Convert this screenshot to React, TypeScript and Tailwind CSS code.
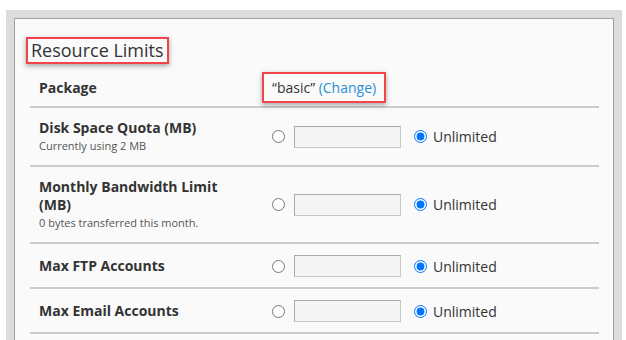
import React from "react";

type Limit = {
  label: string;
  note?: string;
};

const limits: Limit[] = [
  { label: "Disk Space Quota (MB)", note: "Currently using 2 MB" },
  { label: "Monthly Bandwidth Limit (MB)", note: "0 bytes transferred this month." },
  { label: "Max FTP Accounts" },
  { label: "Max Email Accounts" },
];

const LimitRow = ({ limit }: { limit: Limit }) => {
  return (
    <div
      className={
        limit.note
          ? "flex items-center border-b-2 border-[#cccccc] py-[11px]"
          : "flex items-center border-b-2 border-[#cccccc] pt-[11px] pb-[10px]"
      }
    >
      <div className="w-[231px] shrink-0 px-[9px]">
        <div className="text-[14px] leading-[18px] font-bold text-[#333333]">
          {limit.label}
        </div>
        {limit.note && (
          <div className="mt-[1px] text-[11px] leading-[16px] text-[#555555]">
            {limit.note}
          </div>
        )}
      </div>
      <div className="flex items-center pl-[11px]">
        <input
          type="radio"
          name={limit.label}
          className="m-0 h-[13px] w-[13px]"
          readOnly
        />
        <input
          type="text"
          readOnly
          className="ml-[9px] h-[22px] w-[107px] border border-[#a9a9a9] border-r-[#c8c8c8] border-b-[#c8c8c8] bg-[#f5f5f5]"
        />
        <input
          type="radio"
          name={limit.label}
          defaultChecked
          className="m-0 ml-[13px] h-[13px] w-[13px]"
        />
        <span className="ml-[6px] text-[14px] text-[#333333]">Unlimited</span>
      </div>
    </div>
  );
};

const App = () => {
  return (
    <div className="h-[340px] overflow-hidden bg-white pl-[6px] pr-[4px] pt-[10px] font-['Open_Sans',sans-serif]">
      <div className="h-full bg-[#dcdcdc] px-[8px] pt-[8px]">
        <div className="h-full border border-b-0 border-[#a0a0a0] bg-[#fafafa] pl-[15px] pr-[14px] pt-[18px]">
          <div className="-ml-[4px]">
            <h2 className="inline-block border-2 border-[#f04448] px-[3px] text-[18px] leading-[23px] font-normal text-[#333333] shadow-[0_2px_5px_rgba(0,0,0,0.35)]">
              Resource Limits
            </h2>
          </div>
          <div className="mt-[4px]">
            <div className="flex items-center border-b-2 border-[#cccccc] h-[40px]">
              <div className="w-[231px] shrink-0 px-[9px] text-[14px] font-bold text-[#333333]">
                Package
              </div>
              <div className="pl-[1px]">
                <span className="inline-block border-2 border-[#f04448] px-[8px] py-[3px] text-[14px] leading-[21px] text-[#333333] shadow-[0_2px_5px_rgba(0,0,0,0.35)]">
                  “basic” <a className="text-[#2a8fd6]">(Change)</a>
                </span>
              </div>
            </div>
            {limits.map((limit, index) => (
              <LimitRow key={index} limit={limit} />
            ))}
          </div>
        </div>
      </div>
    </div>
  );
};

export default App;
